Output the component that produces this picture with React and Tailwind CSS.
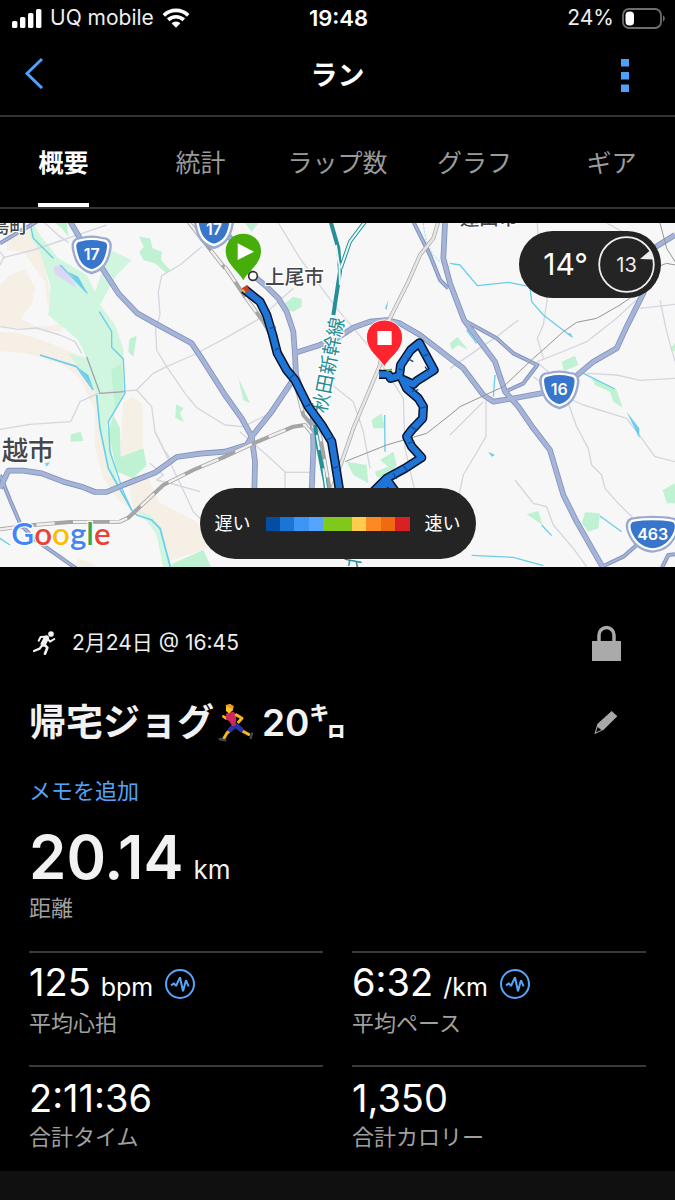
import React from "react";

const TABS = ["概要", "統計", "ラップ数", "グラフ", "ギア"];

const PACE_COLORS = [
  "bg-[#034ea2]", "bg-[#1976d2]", "bg-[#3d95f5]", "bg-[#55a5ff]", "bg-[#80c91c]",
  "bg-[#80c91c]", "bg-[#ffcc4d]", "bg-[#fb8a24]", "bg-[#ef6a10]", "bg-[#d92027]",
];

const STATS = [
  { value: "125", unit: "bpm", label: "平均心拍", chart: true },
  { value: "6:32", unit: "/km", label: "平均ペース", chart: true },
  { value: "2:11:36", label: "合計タイム" },
  { value: "1,350", label: "合計カロリー" },
];

function StatusBar() {
  return (
    <div className="grid h-9 grid-cols-3 items-center pl-3 pr-2.5 text-[21px]">
      <div className="flex items-center gap-2 text-[#eeeeee]">
        <svg className="h-[19px] w-[30px] shrink-0" viewBox="0 0 30 19" fill="#fff" aria-hidden="true">
          <rect x="0" y="12" width="5.4" height="7" rx="1.6" />
          <rect x="8" y="8" width="5.4" height="11" rx="1.6" />
          <rect x="16" y="4" width="5.4" height="15" rx="1.6" />
          <rect x="24" y="0" width="5.4" height="19" rx="1.6" />
        </svg>
        <span className="whitespace-nowrap">UQ mobile</span>
        <svg className="h-5 w-7 shrink-0" viewBox="0 0 28 20" aria-hidden="true">
          <g fill="none" stroke="#fff" strokeWidth="3.6">
            <path d="M1.8 7.4a17.4 17.4 0 0 1 24.4 0" />
            <path d="M6.2 11.9a11.2 11.2 0 0 1 15.6 0" />
          </g>
          <path d="M9.6 15.2a6.3 6.3 0 0 1 8.8 0L14 19.8z" fill="#fff" />
        </svg>
      </div>
      <div className="text-center text-[22px] font-semibold">19:48</div>
      <div className="flex items-center justify-end gap-2 text-[#eeeeee]">
        <span>24%</span>
        <svg className="h-[21px] w-[43px]" viewBox="0 0 43 21" aria-hidden="true">
          <rect x="1" y="1" width="38" height="19" rx="6" fill="none" stroke="#6e6e6e" strokeWidth="1.8" />
          <rect x="3.5" y="3.5" width="8.5" height="14" rx="3.8" fill="#fff" />
          <path d="M41 7.5c2.3 1 2.3 5 0 6z" fill="#6e6e6e" />
        </svg>
      </div>
    </div>
  );
}

function Header() {
  return (
    <header className="grid h-[81px] grid-cols-3 items-center border-b-2 border-[#343434]">
      <button type="button" aria-label="戻る" className="ml-5 flex w-8 justify-start pb-1.5">
        <svg className="h-8 w-7" viewBox="0 0 28 32" fill="none" stroke="#4fa0f8" strokeWidth="3">
          <path d="M22 2 7 16.5 22 31" />
        </svg>
      </button>
      <h1 className="text-center text-[27px] font-bold leading-8">ラン</h1>
      <button type="button" aria-label="メニュー" className="mr-[34px] flex w-8 justify-center justify-self-end">
        <svg className="h-[33px] w-2" viewBox="0 0 8 33" fill="#4fa0f8">
          <rect width="8" height="7.5" />
          <rect y="13" width="8" height="7.5" />
          <rect y="25.5" width="8" height="7.5" />
        </svg>
      </button>
    </header>
  );
}

function Tabs() {
  return (
    <nav className="overflow-hidden border-b-2 border-[#343434]">
      <ul className="-mx-[5px] grid grid-cols-5">
        {TABS.map((tab, i) => (
          <li key={tab} className="flex justify-center">
            <a
              href="#"
              aria-current={i === 0 ? "page" : undefined}
              className={
                i === 0
                  ? "flex h-[90px] items-center whitespace-nowrap border-b-4 border-white pt-2 text-[25px] font-bold text-white"
                  : "flex h-[90px] items-center whitespace-nowrap border-b-4 border-transparent pt-2 text-[25px] text-[#9a9a9a]"
              }
            >
              {tab}
            </a>
          </li>
        ))}
      </ul>
    </nav>
  );
}

const WIDE_ROADS = [
  "M640 24 675 50 700 80",
  "M205 10 240 70 310 165 355 235 412 295 465 325 575 385 605 430 675 540 725 610 755 665 765 740 763 830",
  "M0 820 25 767 70 767 125 775 190 800 245 815 285 831 320 831 370 810 465 773 530 726 600 716 675 710 740 690 755 665",
  "M755 665 815 590 872 505 885 480",
  "M890 412 960 390 1010 370 1060 338 1110 320 1160 315 1200 325 1260 360 1350 430 1390 460 1450 540 1480 560 1530 552 1640 532 1720 490 1780 440 1850 400 1880 335 1930 235 1960 100 2025 60",
  "M740 165 800 215 835 250 860 290 880 350 885 420 888 480 910 540 938 600 940 700 935 830",
  "M1335 24 1330 130 1350 205 1392 315 1440 380 1485 440 1515 530 1555 575 1600 640 1650 705 1690 840 1730 920 1810 1060",
];
const MEDIUM_ROADS = [
  "M1235 10 1290 120 1320 195 1345 220",
  "M1400 320 1490 370 1540 415 1612 450 1570 505 1520 528",
  "M0 85 55 52 110 20",
  "M0 780 30 855 60 925 100 970 235 1065",
  "M1810 1053 1870 1025 1910 990",
  "M1985 1060 2005 1020 2025 1018",
];
const MINOR_ROADS = [
  "M0 150 10 128 100 105 180 78 255 52 320 30", "M0 110 15 130", "M130 20 180 65 205 82",
  "M0 335 55 343 110 339 180 360 225 380 245 415", "M0 643 90 628 212 620 240 560 295 535 410 525 460 475 500 455 580 420 675 370 780 310 880 220",
  "M605 95 540 150 485 182 475 230 480 300 467 340 470 405 500 455 555 535 590 578 675 630", "M410 525 455 575 465 650 540 805 580 890 610 920",
  "M450 745 490 780 470 795 530 810 600 830", "M465 650 490 700 520 745", "M835 24 900 130 1010 280 1120 410 1210 550 1215 700 1245 830",
  "M720 650 800 720 855 770 855 830", "M855 772 935 772", "M985 500 1060 560 1090 650 1110 760", "M675 630 730 635 800 600", "M1350 460 1490 365 1555 315",
  "M1642 250 1630 330 1612 370 1630 430", "M1612 440 1700 405 1760 380 1850 310 1925 240", "M1350 660 1450 560", "M1458 550 1458 665 1390 780 1375 850", "M1600 485 1660 530 1750 570 1880 610 1925 670 1965 725 2025 740",
  "M1705 565 1730 635 1765 700 1775 750 1805 780 1815 820 1850 860 1900 910", "M1760 475 1850 480 1920 496 2025 490", "M1615 445 1680 500", "M1545 795 1600 865 1640 875 1660 930 1720 1000 1760 1055", "M1980 255 2000 350 2025 440", "M1920 280 2025 268", "M1612 24 1615 90", "M1820 24 1920 80 1980 130",
];

function Shield({ x, y, wide, children }) {
  return (
    <g transform={`translate(${x} ${y})`}>
      <path
        d={wide
          ? "M-56-46C-25-52 25-52 56-46 75-46 80-30 72-8 60 24 40 48 0 50-40 48-60 24-72-8-80-30-75-46-56-46Z"
          : "M-36-47C-15-53 15-53 36-47 54-46 58-34 54-14 47 22 34 44 0 54-34 44-47 22-54-14-58-34-54-46-36-47Z"}
        fill="#3876cb" stroke="#9caad0" strokeWidth="10"
      />
      <path
        d={wide
          ? "M-54-42C-25-47 25-47 54-42 70-41 73-28 67-8 56 20 38 42 0 45-38 42-56 20-67-8-73-28-70-41-54-42Z"
          : "M-34-43C-15-48 15-48 34-43 49-42 52-31 48-13 42 19 30 39 0 47-30 39-42 19-48-13-52-31-49-42-34-43Z"}
        fill="#3876cb" stroke="#fff" strokeWidth="7"
      />
      <text y="16" textAnchor="middle" className="fill-white text-[48px] font-semibold">{children}</text>
    </g>
  );
}

function RouteMap() {
  const label = "fill-[#45474b] stroke-white font-medium [paint-order:stroke] [stroke-width:6px]";
  return (
    <svg className="block h-full w-full" viewBox="0 24 2025 1032" preserveAspectRatio="xMidYMid slice" role="img" aria-label="ルートマップ">
      <rect y="0" width="2025" height="1100" fill="#f7f7f8" />
      <g fill="#f5efe6">
        <path d="M20 60 95 20 125 110 150 230 175 330 110 335 60 310 95 270 105 215 75 165 0 210V300L60 310 0 330V335L70 340 180 350 190 330 140 260 135 200 70 110 20 105Z" />
        <path d="M0 210 30 180 70 165 105 220 85 275 50 330 0 330ZM0 350 60 355 150 385 250 425 300 530 310 700 350 800 390 880 360 860 310 790 285 700 283 580 240 490 190 450 80 415 0 408Z" />
        <path d="M370 560 400 545 428 570 428 700 360 725ZM300 535 345 528 330 600 310 640ZM385 790 440 775 475 860 590 920 625 1000 500 1040 460 940 400 885ZM235 1030 280 1045 290 1060H220Z" />
      </g>
      <g fill="#d0f6df">
        <path d="M95 20 120 60 175 130 260 180 285 230 330 105 395 135 350 180 300 270 345 330 370 400 372 540 320 630 350 790 385 870 335 790 300 650 285 525 235 455 205 415 260 430 235 375 145 300 152 215 120 110 90 60Z" />
        <path d="M410 885 450 900 485 940 515 1060H490L470 960 440 915Z" />
      </g>
      <g fill="#bff2d2">
        <path d="M417 65 450 70 458 100 485 110 483 135 510 165 500 175 465 145 430 135 418 110 432 95ZM388 372 410 362 400 425 385 410ZM528 568 550 580 540 595 552 622 526 608ZM212 658 242 650 250 678 212 680ZM333 465 365 445 370 530 340 600 360 640 362 725 430 700 440 750 400 790 350 770 325 650 345 580ZM165 24 200 24 205 65 185 40ZM520 1045 610 1005 635 1060H510Z" />
        <path d="M735 24H775L755 50ZM855 265 880 245 905 252 905 275 880 290 860 283ZM715 490 735 530 750 565 730 555ZM1115 615 1145 595 1155 640 1120 640ZM1040 740 1100 750 1105 805 1060 780ZM1125 770 1165 755 1140 735 1180 710 1190 750 1160 790 1130 785Z" />
        <path d="M1350 385 1372 365 1405 405 1375 390 1355 405ZM1685 440 1725 422 1735 450 1692 468ZM1773 485 1850 525 1868 578 1840 560 1830 530 1785 510ZM1745 925 1755 892 1800 895 1795 940 1765 950ZM1580 898 1615 888 1628 930ZM1988 825 2025 805V865L2000 865ZM2010 400 2025 385V410Z" />
      </g>
      <path d="M160 155 190 150 230 218 165 178Z" fill="#dcd7f6" />
      <g fill="none" stroke="#d5d7df" strokeWidth="4" strokeLinejoin="round">
        {MINOR_ROADS.map((d) => <path key={d} d={d} />)}
      </g>
      <g fill="none" stroke="#6bcdec" strokeWidth="5" strokeLinejoin="round">
        <path d="M90 24 100 70 160 130M180 150 210 180 262 235M298 290 335 350 335 397 370 432 375 535 325 620 330 710 370 830 395 885" strokeWidth="4" />
        <path d="M120 420 230 455 280 525M290 540 300 640 325 760 395 885 410 900 455 915 480 940 512 1060" />
        <path d="M0 970 30 990M1154 600 1155 710M1485 480 1480 545" strokeWidth="4" />
        <path d="M1350 145 1380 150 1432 212 1525 202 1590 215 1595 260 1630 300 1715 365" strokeWidth="4" />
        <path d="M1270 24C1275 90 1300 140 1350 155" stroke="#a6ddea" strokeDasharray="8 3" strokeWidth="3" />
        <path d="M1415 1021 1540 1027 1630 1052M1750 475 1845 522M1800 903 1865 950M1625 930 1655 962M1400 345 1430 385" strokeWidth="4" />
      </g>
      <g fill="#70cdea">
        <path d="M205 170 235 185 262 235ZM235 458 265 480 280 520ZM1880 590 1918 640 1918 670ZM1712 355 1720 370 1700 355ZM1465 710 1485 720 1475 725ZM135 745 150 742 140 755ZM1155 280 1165 255 1160 285Z" />
      </g>
      <g fill="none" strokeLinejoin="round">
        <g stroke="#8192bd">
          {WIDE_ROADS.map((d) => <path key={d} d={d} strokeWidth="17" />)}
          {MEDIUM_ROADS.map((d) => <path key={d} d={d} strokeWidth="12" />)}
        </g>
        <g stroke="#a5b4d7">
          {WIDE_ROADS.map((d) => <path key={d} d={d} strokeWidth="12" />)}
          {MEDIUM_ROADS.map((d) => <path key={d} d={d} strokeWidth="6" />)}
        </g>
        <path d="M260 425 300 535 375 530" stroke="#a9a2b5" strokeWidth="4" />
        <path d="M1035 740 1160 690 1280 655 1350 600 1380 575 1510 515 1600 430 1640 395 1690 350 1730 322 1790 310 1860 270 1910 235M1980 24 2000 100 2025 140M1960 160 2000 145 2025 150" stroke="#969696" strokeWidth="3" />
        <g>
          <path d="M0 943 100 930 210 921 360 920 385 908 490 810 580 765 675 725 760 685 880 635 915 630 935 655M675 155 735 245 790 320 850 430 885 500 910 600 960 660 990 830M565 20 675 160M1315 20 1300 70 1260 120 1225 200 1165 320 1140 450 1060 640 1015 770 990 840" stroke="#a6a5a6" strokeWidth="12" />
          <path d="M0 943 100 930 210 921 360 920 385 908 490 810 580 765 675 725 760 685 880 635 915 630 935 655M675 155 735 245 790 320 850 430 885 500 910 600 960 660 990 830M565 20 675 160" stroke="#f1f0f1" strokeWidth="7" strokeDasharray="55 55" />
          <path d="M1315 20 1300 70 1260 120 1225 200 1165 320 1140 450 1060 640 1015 770 990 840" stroke="#e6e6e7" strokeWidth="8" />
        </g>
        <path d="M992 20 1015 100 1020 170 1000 300M1095 20 1050 80 1022 160M945 630 955 700 975 800 980 840" stroke="#268f96" strokeWidth="12" />
        <path d="M1095 20 1050 80 1022 160" stroke="#e8f8f8" strokeWidth="6" />
        <path d="M1008 90 1016 145M1020 210 1018 145M950 660 958 705M970 760 980 830" stroke="#e8f8f8" strokeWidth="6" />
      </g>

      <g className="font-['Noto_Sans_CJK_JP',sans-serif]">
        <text x="-28" y="53" className={label} fontSize="56">島町</text>
        <text x="5" y="736" className={label} fontSize="79">越市</text>
        <text x="795" y="206" className={label} fontSize="59">上尾市</text>
        <text x="1380" y="31" className={label} fontSize="58">蓮田市</text>
        <text transform="translate(978 596) rotate(-79)" fontSize="58" className="fill-[#258c94] stroke-white [paint-order:stroke] [stroke-width:7px]">秋田新幹線</text>
        <text transform="translate(1076 1062) rotate(-79)" fontSize="58" className="fill-[#258c94]">北</text>
      </g>
      <circle cx="759" cy="183" r="13" fill="#fff" stroke="#333" strokeWidth="5" />

      <Shield x="275" y="119">17</Shield>
      <Shield x="642" y="43">17</Shield>
      <Shield x="1678" y="524">16</Shield>
      <Shield x="1958" y="958" wide>463</Shield>

      <g fill="none" strokeLinejoin="round">
        {[["#07142b", 28], ["#1f74d6", 19]].map(([color, width]) => (
          <g key={color} stroke={color} strokeWidth={width}>
            <path d="M732 222 780 260 800 300 818 360 832 415 860 465 885 495 925 575 965 630 995 680 1005 740 1020 835" />
            <path d="M1137 478 1165 478 1172 490 1198 482 1202 450 1232 405 1258 384 1302 465 1250 498 1240 508 1207 493 1220 520 1255 550 1270 575 1268 610 1235 645 1220 665 1235 695 1265 728 1215 760 1160 790 1120 830" />
            <path d="M1135 830 1165 800 1190 835" />
          </g>
        ))}
        <path d="M809 340 827 336M825 405 841 397M870 490 885 475M916 575 935 565M980 675 1002 665M998 760 1014 755M1196 462 1214 466M1222 430 1240 440M1267 425 1284 418M1235 530 1255 524M1260 580 1280 575M1232 635 1250 645M1225 685 1243 678M1210 752 1222 768M1180 775 1190 792M1285 470 1275 455" stroke="#124b91" strokeWidth="4" />
      </g>
      <path d="M725 220 742 210 748 228 735 235Z" fill="#cf3c25" />
      <path d="M727 224 735 232" stroke="#d8cd31" strokeWidth="5" />
      <path d="M1160 467 1176 463" stroke="#79b52e" strokeWidth="5" />

      <path d="M730 196C716 168 677 148 677 108 677 78 700 56 730 56S783 78 783 108C783 148 744 168 730 196Z" fill="#47ad0a" />
      <path d="M713 85 762 110 713 135Z" fill="#fff" />
      <path d="M1153 455C1138 428 1099 408 1099 367 1099 337 1123 315 1153 315S1208 337 1208 367C1208 408 1168 428 1153 455Z" fill="#ff242d" stroke="#fff" strokeWidth="3" />
      <rect x="1132" y="348" width="43" height="42" fill="#fff" />

      <text x="34" y="991" fontSize="94" className="stroke-white font-['Lato',sans-serif] font-semibold [paint-order:stroke] [stroke-width:7px]">
        <tspan fill="#4285f4">G</tspan><tspan fill="#ea4335">o</tspan><tspan fill="#fbbc05">o</tspan><tspan fill="#4285f4">g</tspan><tspan fill="#34a853">l</tspan><tspan fill="#ea4335">e</tspan>
      </text>
    </svg>
  );
}

function MapPanel() {
  return (
    <section className="relative mt-3.5 h-[344px] overflow-hidden">
      <RouteMap />
      <div className="absolute right-3.5 top-2 flex h-[67px] items-center gap-2.5 rounded-full bg-[#242424] pl-6 pr-1.5">
        <span className="text-[30px]">14°</span>
        <span className="relative flex size-[57px] items-center justify-center text-xl text-[#eeeeee]">
          <svg className="absolute inset-0 size-full" viewBox="0 0 57 57" aria-hidden="true">
            <circle cx="28.5" cy="28.5" r="27.3" fill="none" stroke="#eee" strokeWidth="1.8" />
            <path d="M42 23 52 14.5 56 23.5Z" fill="#eee" />
          </svg>
          13
        </span>
      </div>
      <div className="absolute bottom-2 left-1/2 flex h-[71px] -translate-x-1/2 items-center gap-[15px] whitespace-nowrap rounded-full bg-[#242424] px-[15px] text-lg">
        <span>遅い</span>
        <div className="flex h-3.5 w-36">
          {PACE_COLORS.map((color, i) => (
            <span key={i} className={`flex-1 ${color}`} />
          ))}
        </div>
        <span>速い</span>
      </div>
    </section>
  );
}

function RunIcon() {
  return (
    <svg className="h-6 w-[23px]" viewBox="0 0 69 72" aria-hidden="true">
      <circle cx="54" cy="9" r="8.5" fill="#f2f2f2" />
      <g fill="none" stroke="#f2f2f2" strokeLinejoin="round" strokeLinecap="round">
        <path d="M40 21 31 39" strokeWidth="16" />
        <path d="M35 17 23 18 17 29M43 22 51 32 64 24" strokeWidth="6" />
        <path d="M29 41 20 53 3 60" strokeWidth="7" />
        <path d="M32 39 43 50 36 68" strokeWidth="8" />
      </g>
    </svg>
  );
}

function RunnerEmoji() {
  return (
    <svg className="h-[38px] w-9" viewBox="0 0 108 114" role="img" aria-label="ランナー">
      <g fill="none" strokeLinejoin="round" strokeLinecap="round">
        <path d="M34 27 24 43 16 37" stroke="#f5b51e" strokeWidth="8" />
        <path d="M43 73 27 87 17 104" stroke="#f5b51e" strokeWidth="9" />
        <path d="M62 70 75 82 92 91" stroke="#f5b51e" strokeWidth="9" />
        <path d="M5 105 22 109" stroke="#3c4b5b" strokeWidth="7" />
        <path d="M102 88 98 102" stroke="#3c4b5b" strokeWidth="7" />
        <path d="M49 66 37 77M56 66 69 77" stroke="#29349f" strokeWidth="15" />
      </g>
      <path d="M24 29 47 23 55 33 53 64 43 67 35 53 24 45Z" fill="#cf285d" />
      <path d="M52 31 72 43 59 57" fill="none" stroke="#f5b51e" strokeWidth="9" strokeLinejoin="round" />
      <path d="M24 3 38 1 46 8 44 20 32 27 24 21Z" fill="#ffc633" />
      <path d="M22 4 36 0 47 6 45 18 38 12 25 8Z" fill="#ed9d16" />
    </svg>
  );
}

function PulseIcon() {
  return (
    <svg className="size-[30px]" viewBox="0 0 90 90" fill="none" stroke="#57a5fb" aria-hidden="true">
      <circle cx="45" cy="45" r="42" strokeWidth="6" />
      <path d="M18 49 27 43 33 51 45 25 54 67 63 34 71 52" strokeWidth="6" strokeLinejoin="bevel" />
    </svg>
  );
}

function Summary() {
  return (
    <main className="px-[29px] pt-[54px]">
      <div className="flex h-11 items-center justify-between pr-[25px]">
        <div className="flex items-center gap-4 pl-1 text-[21px] text-[#eeeeee]">
          <RunIcon />
          <span>2月24日 @ 16:45</span>
        </div>
        <svg className="h-9 w-[29px]" viewBox="0 0 29 36" role="img" aria-label="非公開">
          <path d="M7 18V10a7.5 7.5 0 0 1 15 0v8" fill="none" stroke="#aaa" strokeWidth="3.5" />
          <rect y="16" width="29" height="20" fill="#aaa" />
        </svg>
      </div>
      <div className="mt-[34px] flex h-12 items-center justify-between pr-7">
        <h2 className="flex items-center whitespace-nowrap text-[37px] font-semibold leading-[48px] text-[#f2f2f2]">
          <span className="font-bold">帰宅ジョグ</span>
          <span className="ml-1">
            <RunnerEmoji />
          </span>
          <span className="ml-2">20</span>
          <span className="font-bold">㌔</span>
        </h2>
        <button type="button" aria-label="編集">
          <svg className="h-6 w-6" viewBox="0 0 72 72">
            <path d="M53 0 70 16 29 56 1 70 10 39ZM11 48 6 64 22 57Z" fill="#a8a8a8" fillRule="evenodd" />
          </svg>
        </button>
      </div>
      <a href="#" className="mt-7 block w-fit text-[22px] leading-8 text-[#55a3f7]">メモを追加</a>
      <div className="mt-4 flex items-baseline gap-2.5 text-[#f2f2f2]">
        <span className="text-6xl font-semibold leading-[68px]">20.14</span>
        <span className="text-[26px] leading-8">km</span>
      </div>
      <div className="mt-px text-[22px] leading-8 text-[#a0a0a0]">距離</div>
      <dl className="mt-[27px] grid grid-cols-2 gap-x-[29px] gap-y-2">
        {STATS.map((s) => (
          <div key={s.label} className="flex h-[106px] flex-col border-t-2 border-[#3a3a3a] pt-2">
            <dt className="order-2 text-[22px] leading-8 text-[#a0a0a0]">{s.label}</dt>
            <dd className="flex h-[46px] items-center gap-3 text-white">
              <span className="flex items-baseline gap-2.5 leading-[46px]">
                <span className="text-[38px] leading-[46px]">{s.value}</span>
                {s.unit && <span className="text-[25px]">{s.unit}</span>}
              </span>
              {s.chart && <PulseIcon />}
            </dd>
          </div>
        ))}
      </dl>
    </main>
  );
}

export default function App() {
  return (
    <div className="flex min-h-screen flex-col overflow-hidden bg-black font-['Inter','Noto_Sans_CJK_JP',sans-serif] text-white">
      <StatusBar />
      <Header />
      <Tabs />
      <MapPanel />
      <Summary />
      <footer className="min-h-7 grow bg-[#101010]" />
    </div>
  );
}
